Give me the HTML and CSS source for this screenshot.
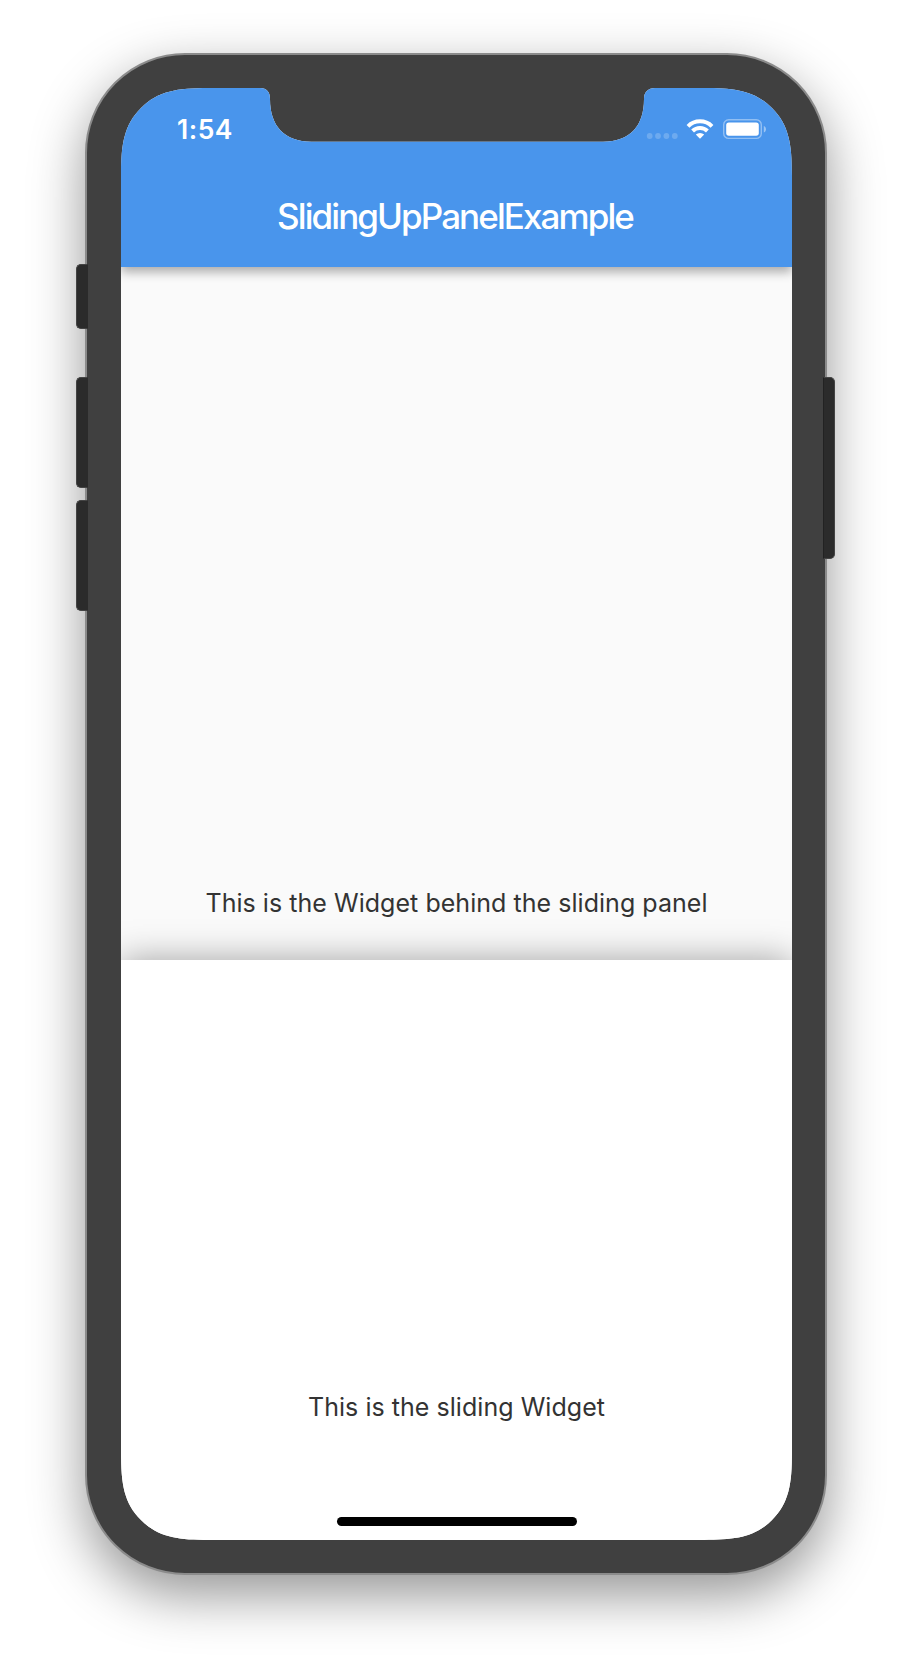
FILE: index.html
```html
<!DOCTYPE html>
<html lang="en">
<head>
<meta charset="utf-8">
<title>SlidingUpPanelExample</title>
<link rel="stylesheet" href="styles.css">
</head>
<body>
<div class="phone">
  <span class="button mute"></span>
  <span class="button volume-up"></span>
  <span class="button volume-down"></span>
  <span class="button power"></span>
  <div class="screen">
    <header class="app-bar">
      <div class="status">
        <span class="clock">1:54</span>
        <svg class="indicators" width="120" height="24" viewBox="0 0 120 24">
          <g fill="#fff" fill-opacity=".2">
            <circle cx="3.7" cy="19" r="2.9"/><circle cx="12" cy="19" r="2.9"/><circle cx="20.4" cy="19" r="2.9"/><circle cx="28.8" cy="19" r="2.9"/>
          </g>
          <g fill="none" stroke="#fff" stroke-width="4">
            <path d="M42 9.3A17 17 0 0 1 66 9.3"/>
            <path d="M46.6 14A10.6 10.6 0 0 1 61.4 14"/>
          </g>
          <path d="M54 21.8L49.8 17.6A6 6 0 0 1 58.2 17.6Z" fill="#fff"/>
          <rect x="77.7" y="2.8" width="37.6" height="18.6" rx="5" fill="none" stroke="#fff" stroke-opacity=".4" stroke-width="1.4"/>
          <rect x="80.2" y="5.5" width="32.6" height="13.2" rx="2.6" fill="#fff"/>
          <path d="M117.8 9C120.7 10 120.7 14.6 117.8 15.6Z" fill="#fff" fill-opacity=".45"/>
        </svg>
      </div>
      <h1 class="title">SlidingUpPanelExample</h1>
    </header>
    <main class="behind"><p class="label">This is the Widget behind the sliding panel</p></main>
    <section class="panel">
      <p class="label">This is the sliding Widget</p>
      <div class="home-indicator"></div>
    </section>
  </div>
</div>
</body>
</html>
```
FILE: styles.css
```css
* { box-sizing: border-box; }

body {
  margin: 0;
  height: 1660px;
  padding: 53px 85px 85px;
  background: #fff;
  font-family: Inter, "Liberation Sans", sans-serif;
  overflow: hidden;
}

.phone {
  position: relative;
  width: 742px;
  height: 1522px;
  padding: 33px 33px 33px 34px;
  border: 2px solid #8b8b8b;
  border-radius: 100px;
  background: #404040;
  box-shadow: 0 20px 54px rgba(0, 0, 0, .42);
}

.button {
  position: absolute;
  left: -11px;
  width: 12px;
  border: 1px solid #444;
  border-right-color: #2b2b2b;
  border-radius: 5px 0 0 5px;
  background: #2b2b2b;
}
.mute { top: 209px; height: 65px; }
.volume-up { top: 322px; height: 111px; }
.volume-down { top: 445px; height: 111px; }
.power {
  top: 322px;
  left: 736px;
  height: 182px;
  border-color: #444;
  border-left-color: #222;
  border-radius: 0 5px 5px 0;
}

/* Rounded display with the sensor cut-out along its top edge */
.screen {
  display: flex;
  flex-direction: column;
  width: 671px;
  height: 1452px;
  background: #fafafa;
  clip-path: path("M0 88C0 56 3 37 20 20C37 3 56 0 88 0H139C146 0 149 4 149 11C149 38 163.5 53.7 190.5 53.7H482C509 53.7 523 38 523 11C523 4 527 0 534 0H583C615 0 634 3 651 20C668 37 671 56 671 88V1364C671 1396 668 1415 651 1432C634 1449 615 1452 583 1452H88C56 1452 37 1449 20 1432C3 1415 0 1396 0 1364Z");
}

.app-bar {
  flex: none;
  height: 179px;
  z-index: 1;
  padding-top: 29px;
  background: #4995ec;
  color: #fff;
  box-shadow: 0 5px 10px rgba(0, 0, 0, .32);
}

.status {
  display: flex;
  justify-content: space-between;
  height: 24px;
  padding: 0 26px 0 56px;
}

.clock {
  font-size: 26.5px;
  line-height: 24px;
  font-weight: 600;
  letter-spacing: .5px;
}

.title {
  margin: 53px 3px 0 0;
  font-size: 35px;
  line-height: 44px;
  font-weight: 500;
  letter-spacing: -1.92px;
  text-align: center;
  white-space: nowrap;
}

.behind {
  display: flex;
  flex: 1;
  flex-direction: column;
  justify-content: flex-end;
  padding-bottom: 41px;
}

.label {
  margin: 0;
  color: #333;
  font-size: 25px;
  line-height: 32px;
  letter-spacing: .04px;
  text-align: center;
  white-space: nowrap;
}

.panel {
  display: flex;
  flex: none;
  flex-direction: column;
  align-items: center;
  justify-content: flex-end;
  height: 580px;
  padding-bottom: 14px;
  background: #fff;
  box-shadow: 0 0 34px rgba(0, 0, 0, .36);
}

.home-indicator {
  width: 240px;
  height: 9px;
  margin-top: 94px;
  border-radius: 5px;
  background: #000;
}
```
